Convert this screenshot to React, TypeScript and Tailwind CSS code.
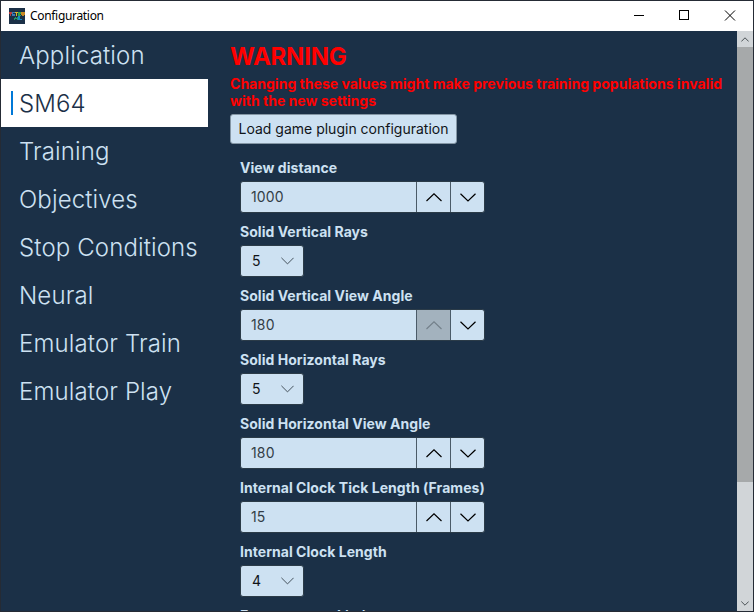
import React from "react";

const nav = ["Application", "SM64", "Training", "Objectives", "Stop Conditions", "Neural", "Emulator Train", "Emulator Play"];

function Chevron({ up }: { up?: boolean }) {
  return (
    <svg width="16" height="9" viewBox="0 0 16 9" fill="none" stroke="currentColor" strokeWidth="1.2">
      <path d={up ? "M0.5 8 L8 0.8 L15.5 8" : "M0.5 0.8 L8 8 L15.5 0.8"} />
    </svg>
  );
}

function Label({ text }: { text: string }) {
  return <div className="h-[22px] whitespace-nowrap text-[14px] leading-[17px] font-bold tracking-[0.04px] text-[#cde1f2]">{text}</div>;
}

function NumberField({ label, value, atMax }: { label: string; value: string; atMax?: boolean }) {
  return (
    <div className="h-16">
      <Label text={label} />
      <div className="flex h-8 w-[245px] overflow-hidden rounded-[3px] border border-[#2b3b48] bg-[#cde1f2] text-black">
        <div className="flex w-[175px] items-center pb-[2px] pl-[10px] text-[14px] tracking-[0.15px] text-[#333d46]">{value}</div>
        <div className={atMax ? "flex w-[34px] items-center justify-center border-l border-[#4b5b68] bg-[#a3b2be] text-[#74818b]" : "flex w-[34px] items-center justify-center border-l border-[#4b5b68]"}>
          <Chevron up />
        </div>
        <div className="flex w-[34px] items-center justify-center border-l border-[#4b5b68]">
          <Chevron />
        </div>
      </div>
    </div>
  );
}

function SelectField({ label, value }: { label: string; value: string }) {
  return (
    <div className="h-16">
      <Label text={label} />
      <div className="flex h-8 w-16 items-center justify-between rounded-[3px] border border-[#2b3b48] bg-[#cde1f2] pr-[9px] pl-[11px] text-[14px] text-[#101418]">
        <span className="pb-[2px]">{value}</span>
        <svg width="13" height="8" viewBox="0 0 13 8" fill="none" stroke="#46525c" strokeWidth="1">
          <path d="M0.4 0.8 L6.5 6.9 L12.6 0.8" />
        </svg>
      </div>
    </div>
  );
}

export default function App() {
  return (
    <div className="flex h-[612px] w-[754px] flex-col overflow-hidden border border-[#252b35] bg-[#1b3047] font-['Inter',sans-serif]">
      <header className="flex h-[30px] shrink-0 items-center bg-white text-black">
        <svg width="16" height="16" viewBox="0 0 16 16" className="ml-2" shapeRendering="crispEdges">
          <rect width="16" height="16" fill="#1b3047" />
          <path d="M0 4h3v2h-1v2h-1v-2h-1z" fill="#b93b3b" />
          <path d="M3 4h3v1h-2v1h2v2h-3z" fill="#397bb5" />
          <path d="M6 4h3v1h-1v3h-1v-3h-1z" fill="#ddb52b" />
          <path d="M9 4h3v2h-1v1h1v1h-3z" fill="#30a34a" />
          <path d="M12 4h4v3h-1v1h-2v-1h-1z" fill="#c98922" />
          <path d="M5 12v-2h1v-1h1v1h1v-1h1v3h-1v-1h-2v1z" fill="#259866" />
          <path d="M9 8h2v3h2v1h-4z" fill="#1689c5" />
        </svg>
        <span className="ml-[5px] font-['Noto_Sans',sans-serif] text-[12px] tracking-[-0.32px]">Configuration</span>
        <div className="mr-[13px] ml-auto flex items-center">
          <svg width="120" height="30" fill="none" stroke="black" strokeWidth="1">
            <path d="M14 14.5h10M59.500 9.500h9v9h-9z" shapeRendering="crispEdges" />
            <path d="M105 9.500l10 10M115 9.500l-10 10" />
          </svg>
        </div>
      </header>
      <div className="flex min-h-0 flex-1">
        <nav className="w-[207px] shrink-0">
          {nav.map((item) =>
            item === "SM64" ? (
              <div key={item} className="flex h-12 items-center bg-white text-[24px] font-light tracking-[0.13px] text-[#1b3047]">
                <span className="ml-[10px] h-6 w-0.5 bg-[#0078d7]" />
                <span className="ml-[6px] pt-[2px]">{item}</span>
              </div>
            ) : (
              <div key={item} className="flex h-12 items-center pt-[2px] pl-[18px] text-[24px] font-light tracking-[0.13px] whitespace-nowrap text-[#cde1f2]">{item}</div>
            ),
          )}
        </nav>
        <main className="min-w-0 flex-1 overflow-hidden pl-[22px]">
          <h1 className="mt-[11px] h-[33px] text-[24px] leading-[29px] font-bold tracking-[-0.25px] text-[#ff0000]">WARNING</h1>
          <p className="text-[14px] leading-[17px] font-bold tracking-[0.02px] whitespace-nowrap text-[#ff0000]">
            Changing these values might make previous training populations invalid
            <br />
            with the new settings
          </p>
          <button className="mt-[5px] flex h-[30px] w-[227px] items-center justify-center rounded-[3px] border border-[#8496a5] bg-[#cde1f2] pb-[2px] text-[14px] whitespace-nowrap text-[#101418]">
            Load game plugin configuration
          </button>
          <div className="mt-[15px] pl-[10px]">
            <NumberField label="View distance" value="1000" />
            <SelectField label="Solid Vertical Rays" value="5" />
            <NumberField label="Solid Vertical View Angle" value="180" atMax />
            <SelectField label="Solid Horizontal Rays" value="5" />
            <NumberField label="Solid Horizontal View Angle" value="180" />
            <NumberField label="Internal Clock Tick Length (Frames)" value="15" />
            <SelectField label="Internal Clock Length" value="4" />
            <Label text="Frames count Limit" />
          </div>
        </main>
        <aside className="flex w-4 shrink-0 flex-col bg-[#d1d5d8] text-[#4c5357]">
          <div className="flex h-4 items-center justify-center">
            <svg width="8" height="5" fill="none" stroke="currentColor"><path d="M0.300 4.500L4 0.800L7.700 4.500" /></svg>
          </div>
          <div className="h-[435px] bg-[#a6a9aa]" />
          <div className="mt-auto flex h-4 items-center justify-center">
            <svg width="8" height="5" fill="none" stroke="currentColor"><path d="M0.300 0.500L4 4.200L7.700 0.500" /></svg>
          </div>
        </aside>
      </div>
    </div>
  );
}
